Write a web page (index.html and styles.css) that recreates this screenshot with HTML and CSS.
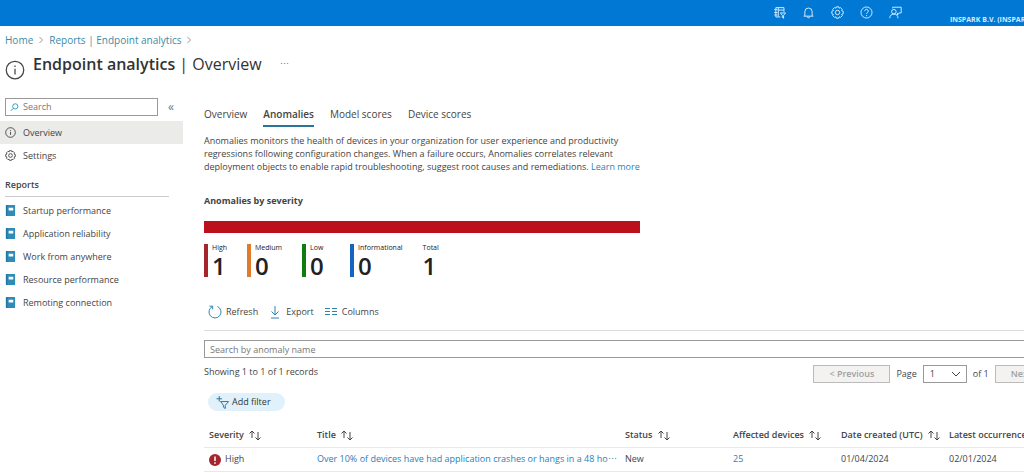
FILE: index.html
```html
<!DOCTYPE html>
<html lang="en">
<head>
    <meta charset="UTF-8">
    <meta name="viewport" content="width=device-width, initial-scale=1.0">
    <title>Endpoint analytics | Overview</title>
    <link rel="stylesheet" href="styles.css">
</head>
<body>
    <!-- Shared shapes -->
    <svg class="sprite" aria-hidden="true">
        <symbol id="gear" viewBox="0 0 16 16">
            <path d="M6.500 1h3l.5 1.700 1.600-.8 2.300 2.300-.8 1.600 1.900.7v3l-1.900.7.8 1.600-2.300 2.300-1.600-.8-.5 1.700h-3L6 13.300l-1.600.8-2.300-2.300.8-1.600L1 9.500v-3l1.900-.7-.8-1.600 2.300-2.300 1.600.8z"/>
            <circle cx="8" cy="8" r="2.700"/>
        </symbol>
        <symbol id="info" viewBox="0 0 16 16">
            <circle cx="8" cy="8" r="7"/>
            <path d="M8 7v4.500M8 4.300v1.300"/>
        </symbol>
        <symbol id="book" viewBox="0 0 12 12">
            <path fill="#2f8bb8" d="M2 0h9v12H2a1 1 0 0 1-1-1V1a1 1 0 0 1 1-1z"/>
            <path fill="#1f76a3" d="M1 0h1.500v12H1z"/>
            <path fill="#fff" d="M4 3h5v3H4z"/>
        </symbol>
        <symbol id="sort" viewBox="0 0 14 12">
            <path d="M4 9V2M1.500 4.500L4 2l2.500 2.500M10 3v8M7.500 8.500L10 11l2.500-2.500"/>
        </symbol>
    </svg>

    <header class="topbar">
        <div class="topbar-icons">
            <button type="button" aria-label="Directories and subscriptions">
                <svg class="icon" viewBox="0 0 16 16"><path d="M13.500 7V2h-10v11.500H9M1.500 4.500h4M1.500 8h4M1.500 11h4M6.500 5h7M6.500 2v11M9 8.500h6.500l-2.500 3V15l-1.500-1v-2.500z"/></svg>
            </button>
            <button type="button" aria-label="Notifications">
                <svg class="icon" viewBox="0 0 16 16"><path d="M3.500 12.500V7a4.500 4.500 0 0 1 9 0v5.500M2 12.500h12M6.500 13a1.500 1.500 0 0 0 3 0"/></svg>
            </button>
            <button type="button" aria-label="Portal settings"><svg class="icon"><use href="#gear"/></svg></button>
            <button type="button" aria-label="Help">
                <svg class="icon" viewBox="0 0 16 16"><circle cx="8" cy="8" r="6.800"/><path d="M5.800 6.300a2.200 2.200 0 1 1 3.400 1.800C8.300 8.700 8 9 8 9.900M8 11.200v1.300"/></svg>
            </button>
            <button type="button" aria-label="Feedback">
                <svg class="icon" viewBox="0 0 16 16"><circle cx="6" cy="7" r="2.800"/><path d="M1 15a5 5 0 0 1 10 0M4.500 3V1.500h10.500v7h-2.500L10.500 11V8.500"/></svg>
            </button>
        </div>
        <div class="account">INSPARK B.V. (INSPARK.NL)</div>
    </header>

    <nav class="breadcrumb" aria-label="Breadcrumb">
        <a href="#">Home</a>
        <svg class="chevron" viewBox="0 0 6 8"><path d="M1.500 1l3 3-3 3"/></svg>
        <a href="#">Reports | Endpoint analytics</a>
        <svg class="chevron" viewBox="0 0 6 8"><path d="M1.500 1l3 3-3 3"/></svg>
    </nav>

    <div class="page-title">
        <svg class="title-icon"><use href="#info"/></svg>
        <h1>Endpoint analytics <span>| Overview</span></h1>
        <button type="button" class="more" aria-label="More">&#8943;</button>
    </div>

    <div class="layout">
        <aside class="sidebar">
            <div class="side-search">
                <label class="search-box">
                    <svg class="search-icon" viewBox="0 0 12 12"><circle cx="7" cy="4.500" r="3.500"/><path d="M4.500 7L1 10.500"/></svg>
                    <input type="text" placeholder="Search" aria-label="Search">
                </label>
                <button type="button" class="collapse" aria-label="Collapse menu">&laquo;</button>
            </div>
            <a href="#" class="side-link active"><svg class="side-icon"><use href="#info"/></svg>Overview</a>
            <a href="#" class="side-link"><svg class="side-icon"><use href="#gear"/></svg>Settings</a>
            <h2>Reports</h2>
            <a href="#" class="side-link"><svg class="book-icon"><use href="#book"/></svg>Startup performance</a>
            <a href="#" class="side-link"><svg class="book-icon"><use href="#book"/></svg>Application reliability</a>
            <a href="#" class="side-link"><svg class="book-icon"><use href="#book"/></svg>Work from anywhere</a>
            <a href="#" class="side-link"><svg class="book-icon"><use href="#book"/></svg>Resource performance</a>
            <a href="#" class="side-link"><svg class="book-icon"><use href="#book"/></svg>Remoting connection</a>
        </aside>

        <main>
            <div class="tabs">
                <a href="#">Overview</a>
                <a href="#" class="active">Anomalies</a>
                <a href="#">Model scores</a>
                <a href="#">Device scores</a>
            </div>

            <p class="intro">Anomalies monitors the health of devices in your organization for user experience and productivity<br>
                regressions following configuration changes. When a failure occurs, Anomalies correlates relevant<br>
                deployment objects to enable rapid troubleshooting, suggest root causes and remediations. <a href="#">Learn more</a></p>

            <h2>Anomalies by severity</h2>
            <div class="severity-bar"></div>
            <div class="counts">
                <div class="count high"><span>High</span><strong>1</strong></div>
                <div class="count medium"><span>Medium</span><strong>0</strong></div>
                <div class="count low"><span>Low</span><strong>0</strong></div>
                <div class="count informational"><span>Informational</span><strong>0</strong></div>
                <div class="count total"><span>Total</span><strong>1</strong></div>
            </div>

            <div class="toolbar">
                <button type="button">
                    <svg class="tool-icon" viewBox="0 0 14 14"><path d="M9.500 1.500a6 6 0 1 1-5.200.1M1.500 1.200h3.200v3.200"/></svg>Refresh
                </button>
                <button type="button">
                    <svg class="tool-icon" viewBox="0 0 14 14"><path d="M7 1v9M3.500 6.500L7 10l3.500-3.500M3 13h8"/></svg>Export
                </button>
                <button type="button">
                    <svg class="tool-icon" viewBox="0 0 14 14"><path d="M1 3.500h5M8 3.500h5M1 6.500h5M8 6.500h5M1 9.500h5M8 9.500h5"/></svg>Columns
                </button>
            </div>

            <input type="text" class="name-search" placeholder="Search by anomaly name" aria-label="Search by anomaly name">

            <div class="records">
                <span>Showing 1 to 1 of 1 records</span>
                <div class="pager">
                    <button type="button" disabled>&lt; Previous</button>
                    <label for="page">Page</label>
                    <span class="page-select">
                        <select id="page"><option>1</option></select>
                        <svg viewBox="0 0 10 6"><path d="M1 1l4 4 4-4"/></svg>
                    </span>
                    <span class="page-total">of 1</span>
                    <button type="button" disabled>Next &gt;</button>
                </div>
            </div>

            <button type="button" class="add-filter">
                <svg viewBox="0 0 14 14"><path d="M3.500 0v6M.5 3h6M5 6h8.500L10 10v3.500l-2-1.500v-2z"/></svg>Add filter
            </button>

            <table>
                <colgroup>
                    <col class="col-small"><col class="col-title"><col class="col-small"><col class="col-small"><col class="col-small"><col>
                </colgroup>
                <thead>
                    <tr>
                        <th>Severity <svg class="sort"><use href="#sort"/></svg></th>
                        <th>Title <svg class="sort"><use href="#sort"/></svg></th>
                        <th>Status <svg class="sort"><use href="#sort"/></svg></th>
                        <th>Affected devices <svg class="sort"><use href="#sort"/></svg></th>
                        <th>Date created (UTC) <svg class="sort"><use href="#sort"/></svg></th>
                        <th>Latest occurrence&hellip;</th>
                    </tr>
                </thead>
                <tbody>
                    <tr>
                        <td><svg class="alert" viewBox="0 0 12 12"><circle cx="6" cy="6" r="6"/><path d="M6 2.500v4.500M6 8.200v1.500"/></svg>High</td>
                        <td><a href="#">Over 10% of devices have had application crashes or hangs in a 48 ho&#8943;</a></td>
                        <td>New</td>
                        <td><a href="#">25</a></td>
                        <td>01/04/2024</td>
                        <td>02/01/2024</td>
                    </tr>
                </tbody>
            </table>
        </main>
    </div>
</body>
</html>
```
FILE: styles.css
```css
* {
    box-sizing: border-box;
}

body {
    margin: 0;
    font-family: "Open Sans", "Noto Sans", sans-serif;
    font-size: 9px;
    line-height: 14px;
    color: #444;
    background-color: #fff;
    overflow: hidden;
}

button,
input,
select {
    font: inherit;
    color: inherit;
}

button {
    border: none;
    background: none;
    padding: 0;
    white-space: nowrap;
}

a {
    color: #2a7fb8;
    text-decoration: none;
}

svg {
    fill: none;
    stroke: currentColor;
    flex-shrink: 0;
}

.sprite {
    display: none;
}

/* Top bar */
.topbar {
    display: flex;
    justify-content: flex-end;
    height: 26px;
    background-color: #0078d4;
    color: #d4ecff;
}

.topbar-icons {
    display: flex;
    align-items: center;
    gap: 16px;
    padding-bottom: 2px;
    margin-right: 48px;
}

.topbar-icons button {
    display: flex;
}

.icon {
    width: 13px;
    height: 13px;
    stroke-width: 1.2;
}

.account {
    width: 74px;
    padding-top: 13px;
    font-size: 7px;
    font-weight: 700;
    white-space: nowrap;
}

/* Breadcrumb and title */
.breadcrumb {
    display: flex;
    align-items: center;
    gap: 5px;
    padding: 7px 5px 0;
    font-size: 10px;
}

.breadcrumb a {
    color: #3b8ba8;
}

.chevron {
    width: 6px;
    height: 8px;
    color: #999;
}

.page-title {
    display: flex;
    align-items: center;
    padding: 0 5px;
    gap: 8px;
    height: 34px;
}

.title-icon {
    width: 20px;
    height: 20px;
    margin-top: 12px;
}

h1 {
    margin: 0;
    font-size: 16px;
    line-height: 24px;
    font-weight: 600;
    color: #333;
}

h1 span {
    font-weight: 400;
}

.more {
    margin-left: 10px;
    color: #777;
}

.layout {
    display: flex;
    align-items: flex-start;
    padding-top: 17px;
}

/* Side menu */
.sidebar {
    width: 183px;
    flex-shrink: 0;
}

.side-search {
    display: flex;
    align-items: center;
    gap: 10px;
    padding: 0 5px;
    margin-bottom: 5px;
}

.search-box {
    display: flex;
    align-items: center;
    width: 153px;
    height: 18px;
    padding-left: 4px;
    gap: 4px;
    border: 1px solid #999;
}

.search-box input {
    min-width: 0;
    padding: 0;
    border: none;
    outline: none;
}

input::placeholder {
    color: #777;
    opacity: 1;
}

.search-icon {
    width: 9px;
    height: 9px;
    color: #2a94ba;
    stroke-width: 1.2;
}

.collapse {
    color: #777;
    font-size: 12px;
}

.side-link {
    display: flex;
    align-items: center;
    gap: 7px;
    height: 23px;
    padding-left: 5px;
    color: #444;
}

.side-link.active {
    background-color: #ebebea;
}

.side-icon {
    width: 11px;
    height: 11px;
    stroke-width: 1.3;
}

.book-icon {
    width: 11px;
    height: 11px;
    stroke: none;
}

h2 {
    margin: 0;
    font-size: 9px;
    line-height: 14px;
    font-weight: 700;
}

.sidebar h2 {
    margin: 11px 14px 2px 5px;
    padding-bottom: 4px;
    border-bottom: 1px solid #ccc;
    font-weight: 600;
}

/* The list is wider than the window, so the last column runs off it */
main {
    flex: 1;
    min-width: 851px;
    margin-left: 21px;
    padding-top: 9px;
}

.tabs {
    display: flex;
    gap: 16px;
    font-size: 10px;
}

.tabs a {
    height: 20px;
    color: #444;
}

.tabs .active {
    font-weight: 600;
    border-bottom: 2px solid #2a7399;
}

.intro {
    margin: 7px 0 21px;
    line-height: 13px;
}

.severity-bar {
    width: 436px;
    height: 12px;
    margin-top: 13px;
    background-color: #bc101c;
}

.counts {
    display: flex;
    gap: 20px;
    margin-top: 11px;
}

.count {
    display: flex;
    flex-direction: column;
    height: 33px;
    padding-left: 4px;
    border-left: 4px solid transparent;
    color: #222;
}

.count span {
    font-size: 7px;
    line-height: 8px;
}

.count strong {
    font-size: 24px;
    line-height: 28px;
    font-weight: 600;
}

.high {
    border-color: #a4262c;
}

.medium {
    border-color: #e07b2c;
}

.low {
    min-width: 28px;
    border-color: #107c10;
}

.informational {
    border-color: #1565c0;
}

.total {
    padding-left: 0;
    border: none;
}

.toolbar {
    display: flex;
    gap: 10px;
    padding: 28px 4px 11px;
    border-bottom: 1px solid #ddd;
}

.toolbar button {
    display: flex;
    align-items: center;
    gap: 4px;
}

.tool-icon {
    width: 14px;
    height: 14px;
    color: #2a85ad;
}

.name-search {
    display: block;
    width: 100%;
    height: 18px;
    margin-top: 9px;
    padding: 0 5px;
    border: 1px solid #999;
}

.records {
    display: flex;
    justify-content: space-between;
    align-items: flex-start;
    margin-top: 7px;
}

.pager {
    display: flex;
    align-items: center;
    gap: 6px;
}

.pager button {
    height: 18px;
    padding: 0 15px;
    border: 1px solid #bbb;
    background-color: #f3f2f1;
    color: #a0a0a0;
    font-weight: 600;
}

.page-select {
    display: grid;
    align-items: center;
}

.page-select select,
.page-select svg {
    grid-area: 1 / 1;
}

.page-select select {
    appearance: none;
    width: 44px;
    height: 18px;
    padding: 0 6px;
    border: 1px solid #999;
    border-radius: 0;
    background: none;
}

.page-select svg {
    width: 10px;
    height: 6px;
    justify-self: end;
    margin-right: 6px;
    pointer-events: none;
}

.add-filter {
    display: flex;
    align-items: center;
    gap: 3px;
    height: 18px;
    margin: 10px 0 0 4px;
    padding: 0 14px 0 8px;
    border-radius: 9px;
    background-color: #e1f1fb;
    color: #333;
}

.add-filter svg {
    width: 13px;
    height: 13px;
    color: #206e99;
}

table {
    width: 100%;
    margin-top: 12px;
    table-layout: fixed;
    border-collapse: collapse;
}

.col-small {
    width: 108px;
}

.col-title {
    width: 308px;
}

th,
td {
    height: 24px;
    padding: 0 0 0 5px;
    border-bottom: 1px solid #e8e8e8;
    font-weight: 400;
    text-align: left;
    white-space: nowrap;
}

th {
    color: #444;
    font-weight: 600;
}

.sort {
    width: 14px;
    height: 12px;
    margin-left: 2px;
    vertical-align: middle;
}

.alert {
    width: 12px;
    height: 12px;
    margin-right: 4px;
    vertical-align: middle;
}

.alert circle {
    fill: #a4262c;
    stroke: none;
}

.alert path {
    stroke: #fff;
    stroke-width: 1.5;
}
```
